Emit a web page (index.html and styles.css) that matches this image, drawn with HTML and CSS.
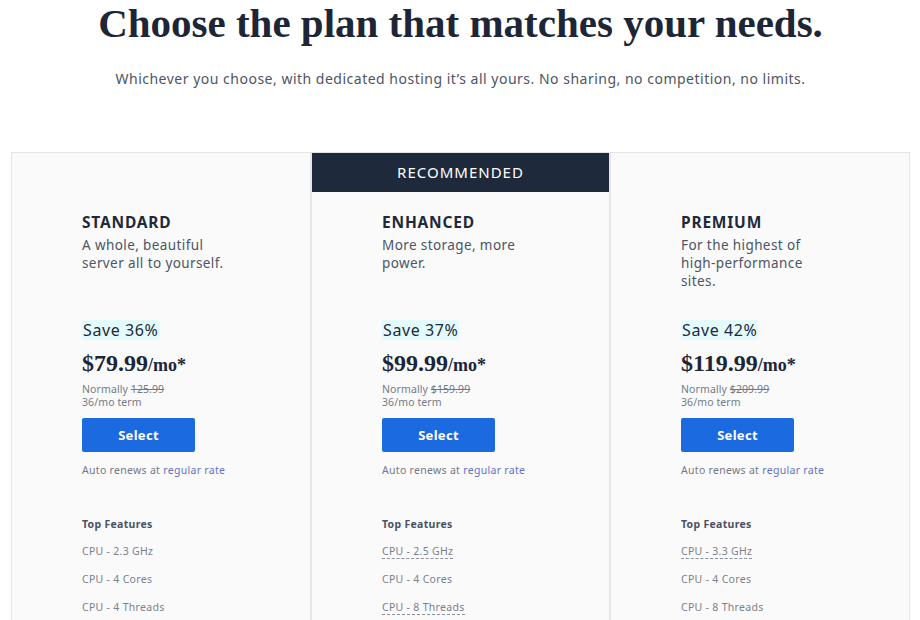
FILE: index.html
```html
<!DOCTYPE html>
<html lang="en">
<head>
<meta charset="utf-8">
<title>Dedicated hosting plans</title>
<link rel="stylesheet" href="styles.css">
</head>
<body>
<main class="page">
  <h1 class="title">Choose the plan that matches your needs.</h1>
  <p class="subtitle">Whichever you choose, with dedicated hosting it’s all yours. No sharing, no competition, no limits.</p>

  <section class="plans">
    <article class="plan">
      <div class="ribbon ribbon-empty"></div>
      <div class="plan-body">
        <h2 class="plan-name">STANDARD</h2>
        <p class="plan-desc">A whole, beautiful<br>server all to yourself.</p>
        <span class="save">Save 36%</span>
        <div class="price">$79.99<span class="per">/mo*</span></div>
        <div class="normally">Normally <s>125.99</s><br>36/mo term</div>
        <button class="select">Select</button>
        <p class="renew">Auto renews at <span class="link">regular rate</span></p>
        <h3 class="feat-title">Top Features</h3>
        <ul class="features">
          <li><span>CPU - 2.3 GHz</span></li>
          <li><span>CPU - 4 Cores</span></li>
          <li><span>CPU - 4 Threads</span></li>
        </ul>
      </div>
    </article>

    <article class="plan">
      <div class="ribbon">RECOMMENDED</div>
      <div class="plan-body">
        <h2 class="plan-name">ENHANCED</h2>
        <p class="plan-desc">More storage, more<br>power.</p>
        <span class="save">Save 37%</span>
        <div class="price">$99.99<span class="per">/mo*</span></div>
        <div class="normally">Normally <s>$159.99</s><br>36/mo term</div>
        <button class="select">Select</button>
        <p class="renew">Auto renews at <span class="link">regular rate</span></p>
        <h3 class="feat-title">Top Features</h3>
        <ul class="features">
          <li><span class="tip">CPU - 2.5 GHz</span></li>
          <li><span>CPU - 4 Cores</span></li>
          <li><span class="tip">CPU - 8 Threads</span></li>
        </ul>
      </div>
    </article>

    <article class="plan">
      <div class="ribbon ribbon-empty"></div>
      <div class="plan-body">
        <h2 class="plan-name">PREMIUM</h2>
        <p class="plan-desc">For the highest of<br>high-performance<br>sites.</p>
        <span class="save">Save 42%</span>
        <div class="price">$119.99<span class="per">/mo*</span></div>
        <div class="normally">Normally <s>$209.99</s><br>36/mo term</div>
        <button class="select">Select</button>
        <p class="renew">Auto renews at <span class="link">regular rate</span></p>
        <h3 class="feat-title">Top Features</h3>
        <ul class="features">
          <li><span class="tip">CPU - 3.3 GHz</span></li>
          <li><span>CPU - 4 Cores</span></li>
          <li><span>CPU - 8 Threads</span></li>
        </ul>
      </div>
    </article>
  </section>
</main>
</body>
</html>
```

FILE: styles.css
```css
* { box-sizing: border-box; }

html, body {
  margin: 0;
  padding: 0;
  background: #ffffff;
}

body {
  font-family: "Noto Sans", "Open Sans", Arial, sans-serif;
  color: #1e2a3b;
}

.page {
  padding: 0 10px 0 11px;
}

.title {
  margin: -1px 0 0;
  font-family: "Liberation Serif", "Times New Roman", serif;
  font-weight: 700;
  font-size: 41px;
  line-height: 48px;
  text-align: center;
  color: #1d2637;
}

.subtitle {
  margin: 22px 0 0;
  font-size: 14px;
  line-height: 20px;
  letter-spacing: 0.5px;
  text-align: center;
  color: #4d5565;
}

.plans {
  margin-top: 63px;
  display: grid;
  grid-template-columns: 298px 297px 298px;
  column-gap: 2px;
  background: #e6e6e6;
  border: 1px solid #e4e4e4;
  border-bottom: 0;
  height: 480px;
}

.plan {
  background: #fafafa;
  display: flex;
  flex-direction: column;
}

.ribbon {
  height: 39px;
  background: #1e2a3b;
  color: #ffffff;
  font-size: 15px;
  line-height: 39px;
  text-align: center;
  letter-spacing: 1px;
}

.ribbon-empty {
  background: transparent;
}

.plan-body {
  padding: 20px 20px 0 70px;
}

.plan-name {
  margin: 0;
  font-size: 15.5px;
  line-height: 20px;
  font-weight: 700;
  letter-spacing: 0.8px;
  color: #1e2a3b;
}

.plan-desc {
  margin: 4px 0 0;
  height: 72px;
  font-size: 13.5px;
  line-height: 18px;
  letter-spacing: 0.4px;
  color: #4b5567;
}

.save {
  display: inline-block;
  margin-top: 12px;
  padding: 0 1px 0 1px;
  background: #e3fbfd;
  font-size: 16px;
  line-height: 20px;
  letter-spacing: 0.6px;
  color: #1e2a3b;
}

.price {
  margin-top: 9px;
  font-family: "Liberation Serif", "Times New Roman", serif;
  font-weight: 700;
  font-size: 24px;
  line-height: 26px;
  color: #1d2637;
}

.per {
  font-size: 18px;
}

.normally {
  margin-top: 5px;
  font-size: 10.5px;
  line-height: 12.5px;
  letter-spacing: 0.1px;
  color: #737a88;
}

.normally s {
  color: #737a88;
}

.select {
  display: block;
  margin-top: 10px;
  width: 113px;
  height: 34px;
  border: 0;
  border-radius: 2px;
  background: #1b6ae0;
  color: #ffffff;
  font-family: inherit;
  font-size: 13px;
  font-weight: 700;
  letter-spacing: 0.3px;
  cursor: pointer;
}

.renew {
  margin: 10px 0 0;
  font-size: 10.5px;
  line-height: 16px;
  letter-spacing: 0.3px;
  color: #727987;
}

.link {
  color: #6272c8;
}

.feat-title {
  margin: 38px 0 0;
  font-size: 10.5px;
  line-height: 16px;
  font-weight: 700;
  letter-spacing: 0.3px;
  color: #4a5263;
}

.features {
  list-style: none;
  margin: 11px 0 0;
  padding: 0;
}

.features li {
  font-size: 10.5px;
  line-height: 16px;
  height: 28px;
  letter-spacing: 0.3px;
  color: #7a808c;
}

.tip {
  border-bottom: 1px dashed #8a909c;
}
```
